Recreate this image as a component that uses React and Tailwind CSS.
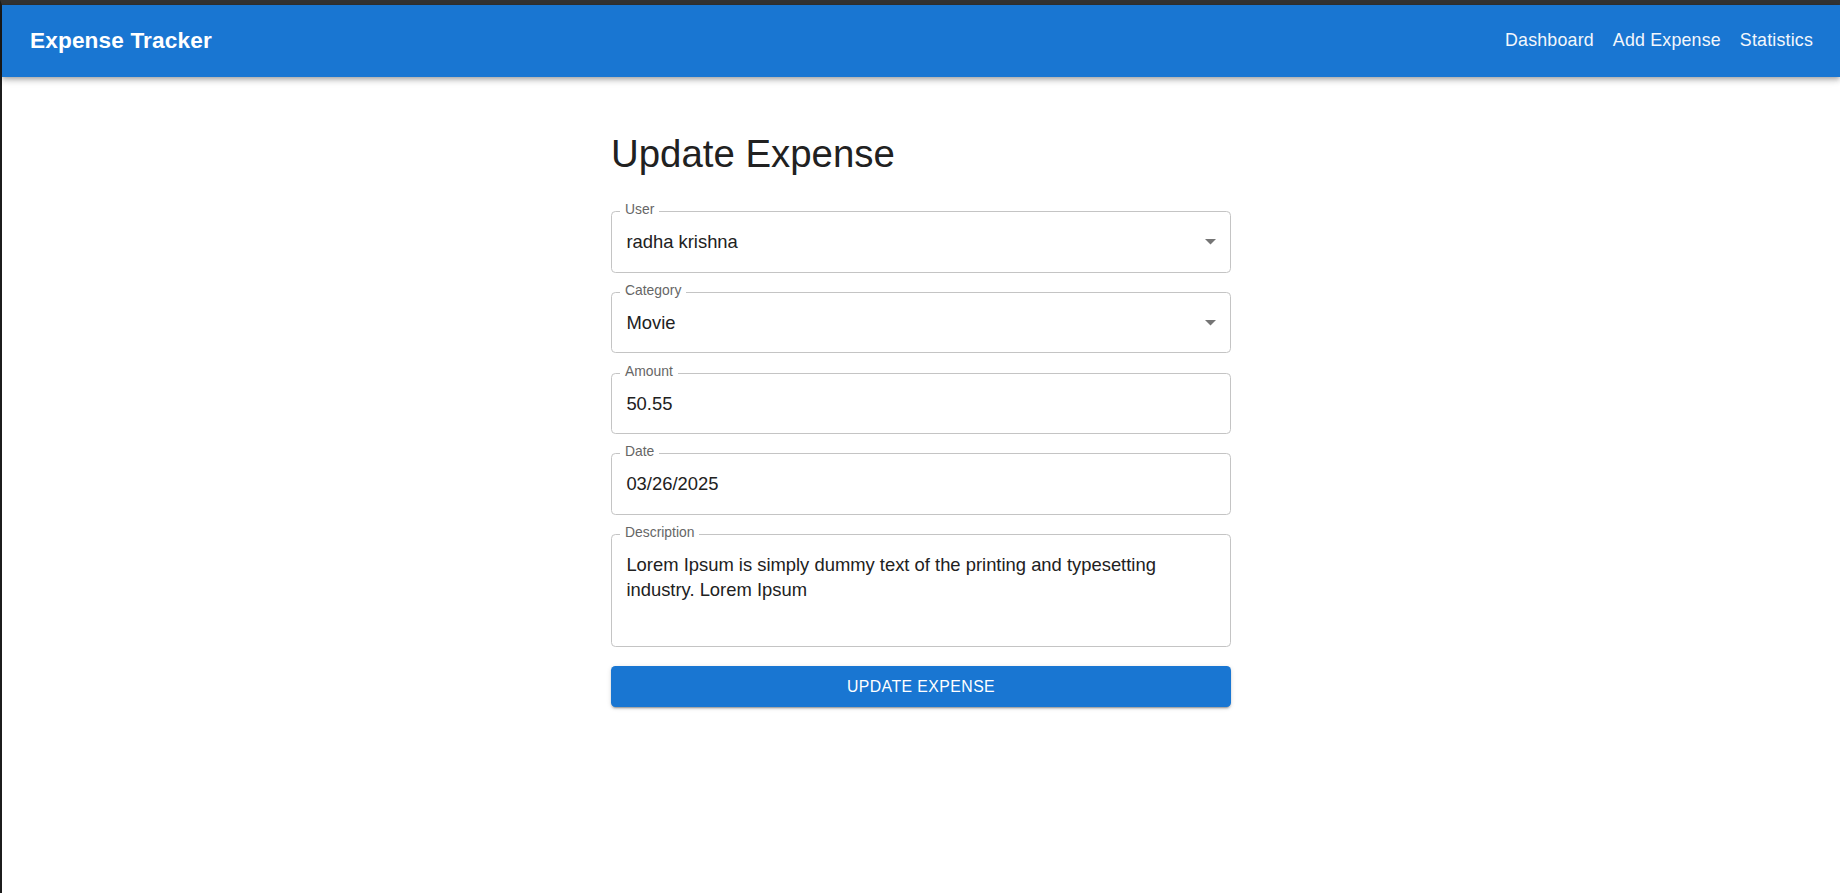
import React from "react";

function Arrow() {
  return (
    <svg width="11" height="6" viewBox="0 0 11 6" className="ml-auto shrink-0">
      <polygon points="0,0 11,0 5.5,5.5" fill="#757575" />
    </svg>
  );
}

function Field({ label, value, select }) {
  return (
    <div className="relative h-[61.6px] rounded-[4.4px] border border-[#c4c4c4] flex items-center pl-[14.4px] pr-[14px]">
      <span className="absolute left-[8px] -top-[12px] px-[5px] bg-white text-[13.9px] leading-[18px] text-[#666666]">
        {label}
      </span>
      <span className="text-[18.4px] text-[#212121]">{value}</span>
      {select && <Arrow />}
    </div>
  );
}

export default function App() {
  return (
    <div className="min-h-screen bg-white border-t-[5px] border-t-[#333333] border-l-2 border-l-[#1c1c1c] font-['Liberation_Sans',Arial,sans-serif]">
      <header className="relative z-10 h-[72px] bg-[#1976d2] text-white flex items-center justify-between pl-[28px] pr-[27px] shadow-[0px_2px_4px_-1px_rgba(0,0,0,0.2),0px_4px_5px_0px_rgba(0,0,0,0.14),0px_1px_10px_0px_rgba(0,0,0,0.12)]">
        <div className="text-[22.6px] font-bold leading-none tracking-[0.15px]">Expense Tracker</div>
        <nav className="flex items-center gap-[19px] text-[17.8px] leading-none tracking-[0.2px] text-[#f3f7fc]">
          <span>Dashboard</span>
          <span>Add Expense</span>
          <span>Statistics</span>
        </nav>
      </header>
      <main className="pt-[54px]">
        <div className="w-[620px] mx-auto">
          <h1 className="text-[38.4px] leading-[46px] font-normal text-[#212121] mb-[34px]">Update Expense</h1>
          <div className="flex flex-col gap-[19.2px]">
            <Field label="User" value="radha krishna" select />
            <Field label="Category" value="Movie" select />
            <Field label="Amount" value="50.55" />
            <Field label="Date" value="03/26/2025" />
            <div className="relative h-[113px] rounded-[4.4px] border border-[#c4c4c4] pl-[14.4px] pr-[14px] pt-[17px]">
              <span className="absolute left-[8px] -top-[12px] px-[5px] bg-white text-[13.9px] leading-[18px] text-[#666666]">
                Description
              </span>
              <div className="text-[18.4px] leading-[25px] text-[#212121]">
                Lorem Ipsum is simply dummy text of the printing and typesetting
                <br />
                industry. Lorem Ipsum
              </div>
            </div>
            <button className="h-[40.5px] w-full rounded-[4.4px] bg-[#1976d2] text-white text-[15.8px] font-normal tracking-[0.45px] uppercase shadow-[0px_3px_1px_-2px_rgba(0,0,0,0.2),0px_2px_2px_0px_rgba(0,0,0,0.14),0px_1px_5px_0px_rgba(0,0,0,0.12)]">
              Update Expense
            </button>
          </div>
        </div>
      </main>
    </div>
  );
}
